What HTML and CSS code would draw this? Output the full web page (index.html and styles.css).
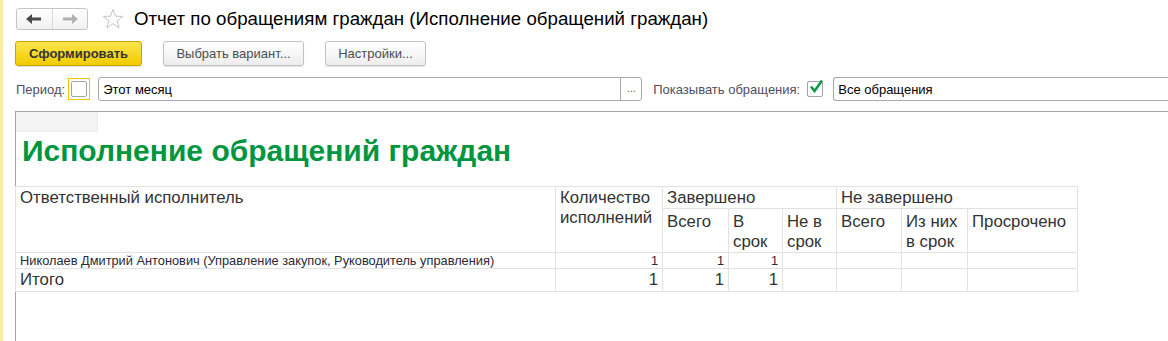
FILE: index.html
```html
<!DOCTYPE html>
<html lang="ru">
<head>
  <meta charset="UTF-8">
  <title>Отчет по обращениям граждан</title>
  <link rel="stylesheet" href="styles.css">
</head>
<body>

  <div class="topbar">
    <div class="nav">
      <span class="nav-btn">
        <svg width="16" height="10" viewBox="0 0 16 10"><path d="M0 5 L6 0 L6 3.5 L15 3.5 L15 6.5 L6 6.5 L6 10 Z" fill="#4a4a4a"/></svg>
      </span>
      <span class="nav-btn">
        <svg width="16" height="10" viewBox="0 0 16 10"><path d="M16 5 L10 0 L10 3.5 L1 3.5 L1 6.5 L10 6.5 L10 10 Z" fill="#b0b0b0"/></svg>
      </span>
    </div>
    <svg class="star" width="22" height="22" viewBox="0 0 22 22"><path d="M11 1.5 L13.6 8.2 L20.7 8.4 L15.1 12.8 L17.1 19.8 L11 15.7 L4.9 19.8 L6.9 12.8 L1.3 8.4 L8.4 8.2 Z" fill="none" stroke="#c2c2c2" stroke-width="1"/></svg>
    <h1 class="title">Отчет по обращениям граждан (Исполнение обращений граждан)</h1>
  </div>

  <div class="actions">
    <button class="btn btn-main">Сформировать</button>
    <button class="btn btn-variant">Выбрать вариант...</button>
    <button class="btn btn-settings">Настройки...</button>
  </div>

  <div class="filters">
    <span class="label">Период:</span>
    <span class="check-focus"><span class="check"></span></span>
    <div class="field field-period">
      <span class="field-text">Этот месяц</span>
      <span class="field-choice">...</span>
    </div>
    <span class="label label-show">Показывать обращения:</span>
    <span class="check check-on">
      <svg width="16" height="16" viewBox="0 0 16 16"><path d="M3 7.5 L6.5 12 L14 1.5" fill="none" stroke="#0f9a46" stroke-width="2.6"/></svg>
    </span>
    <div class="field field-kind">
      <span class="field-text">Все обращения</span>
    </div>
  </div>

  <div class="report">
    <div class="corner"></div>
    <h2 class="report-title">Исполнение обращений граждан</h2>
    <table class="grid">
      <colgroup>
        <col style="width:540px">
        <col style="width:107px">
        <col style="width:66px">
        <col style="width:54px">
        <col style="width:54px">
        <col style="width:65px">
        <col style="width:66px">
        <col style="width:110px">
      </colgroup>
      <tr class="head-1">
        <td rowspan="2">Ответственный исполнитель</td>
        <td rowspan="2">Количество исполнений</td>
        <td colspan="3">Завершено</td>
        <td colspan="3">Не завершено</td>
      </tr>
      <tr class="head-2">
        <td>Всего</td>
        <td>В<br>срок</td>
        <td>Не в<br>срок</td>
        <td>Всего</td>
        <td>Из них<br>в срок</td>
        <td>Просрочено</td>
      </tr>
      <tr class="row-item">
        <td>Николаев Дмитрий Антонович (Управление закупок, Руководитель управления)</td>
        <td class="num">1</td>
        <td class="num">1</td>
        <td class="num">1</td>
        <td></td>
        <td></td>
        <td></td>
        <td></td>
      </tr>
      <tr class="row-total">
        <td>Итого</td>
        <td class="num">1</td>
        <td class="num">1</td>
        <td class="num">1</td>
        <td></td>
        <td></td>
        <td></td>
        <td></td>
      </tr>
    </table>
  </div>

</body>
</html>
```

FILE: styles.css
```css
html, body {
  margin: 0;
  height: 341px;
  overflow: hidden;
}
body {
  font-family: "Liberation Sans", Arial, sans-serif;
  background: #fff;
  color: #333;
  border-left: 3px solid #fbeaa8;
  box-sizing: border-box;
}
.topbar {
  display: flex;
  align-items: center;
  padding: 8px 0 0 13px;
  height: 22px;
}
.nav {
  display: flex;
  width: 72px;
  height: 22px;
  box-sizing: border-box;
  border: 1px solid #c4c4c4;
  border-radius: 3px;
  background: linear-gradient(#fff, #f1f1f1);
}
.nav-btn {
  flex: 1;
  display: flex;
  align-items: center;
  justify-content: center;
}
.nav-btn + .nav-btn {
  border-left: 1px solid #dadada;
}
.star {
  margin-left: 14px;
}
.title {
  margin: 0 0 0 10px;
  font-size: 18.7px;
  font-weight: normal;
  color: #000;
  line-height: 22px;
  white-space: nowrap;
}
.actions {
  display: flex;
  gap: 21px;
  padding: 11px 0 0 12px;
}
.btn {
  height: 25px;
  padding: 0;
  font-family: inherit;
  font-size: 13px;
  color: #4d4d4d;
  border: 1px solid #c2c2c2;
  border-radius: 3px;
  background: linear-gradient(#fff, #ededed);
  box-shadow: 0 1px 1px rgba(0, 0, 0, 0.12);
}
.btn-main {
  width: 127px;
  font-weight: bold;
  color: #333;
  border-color: #c9a400;
  background: linear-gradient(#fbe54e, #f0cc00);
}
.btn-variant {
  width: 141px;
}
.btn-settings {
  width: 101px;
}
.filters {
  display: flex;
  align-items: center;
  padding: 11px 0 0 13px;
  height: 24px;
}
.filters > * {
  flex-shrink: 0;
}
.label {
  font-size: 13px;
  color: #4f4f5f;
  white-space: nowrap;
}
.check-focus {
  display: flex;
  align-items: center;
  justify-content: center;
  width: 22px;
  height: 22px;
  box-sizing: border-box;
  margin-left: 3px;
  border: 1px solid #f2c200;
}
.check {
  display: block;
  width: 16px;
  height: 16px;
  box-sizing: border-box;
  border: 1px solid #a4a4a4;
  border-radius: 2px;
  background: #fff;
}
.check-on {
  position: relative;
  margin-left: 7px;
}
.check-on svg {
  position: absolute;
  left: 0;
  top: -3px;
}
.field {
  display: flex;
  align-items: center;
  height: 24px;
  box-sizing: border-box;
  border: 1px solid #a8a8a8;
  border-radius: 3px;
  font-size: 13px;
  color: #000;
}
.field-text {
  flex: 1;
  padding-left: 4px;
}
.field-period {
  width: 544px;
  margin-left: 8px;
}
.field-choice {
  width: 20px;
  height: 22px;
  line-height: 20px;
  text-align: center;
  font-size: 11px;
  color: #555;
  border-left: 1px solid #a8a8a8;
}
.label-show {
  margin-left: 11px;
}
.field-kind {
  flex: 1;
  flex-shrink: 1;
  margin-left: 10px;
  border-right: none;
  border-radius: 3px 0 0 3px;
}
.report {
  margin: 10px 0 0 12px;
  border-top: 1px solid #a4a4a4;
  border-left: 1px solid #a4a4a4;
  height: 240px;
}
.corner {
  width: 81px;
  height: 19px;
  background: #f4f4f4;
  border-right: 1px solid #ececec;
  border-bottom: 1px solid #ececec;
}
.report-title {
  margin: 0;
  height: 54px;
  padding: 2px 0 0 6px;
  box-sizing: border-box;
  font-size: 30px;
  font-weight: bold;
  color: #00963f;
  line-height: 34px;
  white-space: nowrap;
}
.grid {
  table-layout: fixed;
  width: 1062px;
  margin-left: -1px;
  border-collapse: collapse;
  color: #333;
}
.grid td {
  border: 1px solid #e2e2e2;
  padding: 0 4px 0 4px;
  vertical-align: top;
  font-size: 16.8px;
  line-height: 20px;
  overflow: hidden;
  white-space: nowrap;
}
.head-1 td {
  height: 19px;
  padding-top: 1px;
}
.head-1 td[rowspan] {
  white-space: normal;
}
.head-2 td {
  height: 39px;
  padding-top: 3px;
}
.row-item td {
  height: 15px;
  font-size: 12.8px;
  line-height: 15px;
  color: #2a2a3a;
}
.row-total td {
  height: 22px;
  line-height: 22px;
}
.grid .num {
  text-align: right;
}
```
